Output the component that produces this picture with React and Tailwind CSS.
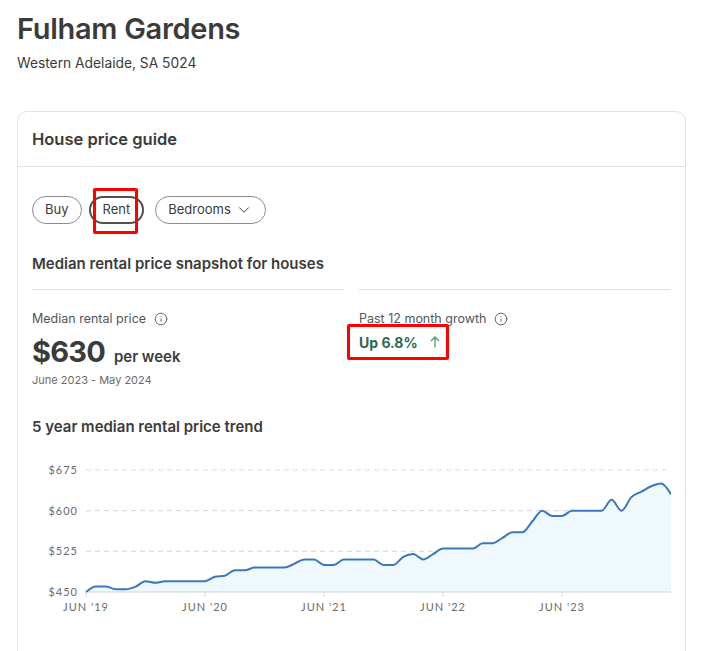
import { Info, ChevronDown } from 'lucide-react';

const rents = [
  450, 460, 460, 455, 455, 460, 470, 467, 470, 470, 470, 470, 470, 478, 480, 490, 490, 495, 495, 495,
  495, 502, 510, 510, 500, 500, 510, 510, 510, 510, 500, 500, 515, 520, 510, 520, 530, 530, 530, 530,
  540, 540, 550, 560, 560, 580, 600, 590, 590, 600, 600, 600, 600, 620, 600, 625, 635, 645, 650, 630,
];

const X0 = 54;
const STEP = 119 / 12;
const BASE = 137;
const yOf = (v) => BASE - (v - 450) * (122 / 225);

// monotone cubic, same idea as d3.curveMonotoneX
const monotonePath = (pts) => {
  const n = pts.length;
  const t = new Array(n).fill(0);
  const slope = (i) => (pts[i + 1][1] - pts[i][1]) / (pts[i + 1][0] - pts[i][0]);
  for (let i = 1; i < n - 1; i++) {
    const s0 = slope(i - 1);
    const s1 = slope(i);
    const h0 = pts[i][0] - pts[i - 1][0];
    const h1 = pts[i + 1][0] - pts[i][0];
    const p = (s0 * h1 + s1 * h0) / (h0 + h1);
    t[i] = (Math.sign(s0) + Math.sign(s1)) * Math.min(Math.abs(s0), Math.abs(s1), 0.5 * Math.abs(p)) || 0;
  }
  t[0] = (3 * slope(0) - t[1]) / 2;
  t[n - 1] = (3 * slope(n - 2) - t[n - 2]) / 2;
  let d = `M${pts[0][0]},${pts[0][1]}`;
  for (let i = 0; i < n - 1; i++) {
    const [xa, ya] = pts[i];
    const [xb, yb] = pts[i + 1];
    const dx = (xb - xa) / 3;
    d += ` C${xa + dx},${ya + dx * t[i]} ${xb - dx},${yb - dx * t[i + 1]} ${xb},${yb}`;
  }
  return d;
};

const TrendChart = () => {
  const pts = rents.map((v, i) => [X0 + i * STEP, yOf(v)]);
  const line = monotonePath(pts);
  const last = pts[pts.length - 1][0];
  const area = `${line} L${last},${BASE} L${X0},${BASE} Z`;
  const ticks = [0, 12, 24, 36, 48];
  const labels = ["JUN '19", "JUN '20", "JUN '21", "JUN '22", "JUN '23"];

  return (
    <svg width="639" height="180" className="block mt-[16px]" style={{ fontFamily: 'Lato, sans-serif' }}>
      {[675, 600, 525].map((v) => (
        <line key={v} x1={X0} x2={634} y1={yOf(v)} y2={yOf(v)} stroke="#dcdcdc" strokeWidth="1.2" strokeDasharray="5 4" />
      ))}
      <path d={area} fill="#eef8fd" />
      <line x1={X0} x2={last} y1={BASE} y2={BASE} stroke="#d4d4d4" strokeWidth="1.2" />
      {ticks.map((i) => (
        <line key={i} x1={X0 + i * STEP} x2={X0 + i * STEP} y1={BASE} y2={BASE + 5} stroke="#d8d8d8" strokeWidth="1" />
      ))}
      <path d={line} fill="none" stroke="#3b77bd" strokeWidth="2" />
      {[675, 600, 525, 450].map((v) => (
        <text key={v} x={46} y={yOf(v) + 4} textAnchor="end" fontSize="11" letterSpacing="1" fill="#6b6b6b">
          ${v}
        </text>
      ))}
      {ticks.map((i, k) => (
        <text key={i} x={X0 + i * STEP} y={156} textAnchor="middle" fontSize="11" letterSpacing="1" fill="#6b6b6b">
          {labels[k]}
        </text>
      ))}
    </svg>
  );
};

const Pill = ({ children, active }) => (
  <button
    className={`h-[28px] rounded-full px-[12px] text-[13px] text-[#3b3b3b] flex items-center gap-[4px] ${
      active ? 'border-2 border-[#505050]' : 'border border-[#8c8c8c]'
    }`}
  >
    {children}
  </button>
);

export default function App() {
  return (
    <div className="bg-white min-h-screen pl-[17px] pt-[11px] text-[#3b3b3b]" style={{ fontFamily: 'Inter, sans-serif' }}>
      <h1 className="text-[29px] leading-[36px] font-semibold tracking-[-0.3px]">Fulham Gardens</h1>
      <p className="mt-[6px] text-[13.8px] leading-[20px]">Western Adelaide, SA 5024</p>

      <div className="mt-[38px] w-[669px] rounded-[10px] border border-[#e2e2e2] pb-10">
        <div className="h-[55px] border-b border-[#e2e2e2] px-[14px] flex items-center">
          <h2 className="text-[16.5px] font-semibold">House price guide</h2>
        </div>

        <div className="px-[14px]">
          <div className="pt-[29px] flex items-center">
            <Pill>Buy</Pill>
            <div className="relative ml-[7px]">
              <Pill active>Rent</Pill>
              <span className="absolute left-[4px] right-[6px] -top-[8px] -bottom-[10px] border-[3px] border-[#ff0000] rounded-[2px]" />
            </div>
            <div className="ml-[11px]">
              <Pill>
                Bedrooms <ChevronDown size={18} strokeWidth={1.3} />
              </Pill>
            </div>
          </div>

          <h3 className="mt-[28px] text-[15px] leading-[24px] font-semibold">Median rental price snapshot for houses</h3>

          <div className="mt-[13px] grid grid-cols-2 gap-[15px]">
            <div>
              <div className="h-px bg-[#e2e2e2]" />
              <div className="mt-[19px] flex items-center gap-[6px] text-[12.5px] leading-[20px] text-[#555]">
                Median rental price <Info size={14} strokeWidth={1.5} className="ml-[2px]" />
              </div>
              <div className="mt-[3px] flex items-baseline gap-[9px]">
                <span className="text-[29px] leading-[40px] font-bold tracking-[-0.8px]">$630</span>
                <span className="text-[15px] font-semibold">per week</span>
              </div>
              <p className="text-[11px] leading-[16px] text-[#6b6b6b]">June 2023 - May 2024</p>
            </div>
            <div>
              <div className="h-px bg-[#e2e2e2]" />
              <div className="mt-[19px] flex items-center gap-[6px] text-[12.5px] leading-[20px] text-[#555]">
                Past 12 month growth <Info size={14} strokeWidth={1.5} className="ml-[2px]" />
              </div>
              <div className="relative mt-[1px] inline-flex items-center gap-[12px] h-[24px]">
                <span className="text-[14px] font-bold text-[#2d6a4f]">Up 6.8%</span>
                <svg width="10" height="12" viewBox="0 0 10 12" fill="none" stroke="#5a9676" strokeWidth="1.3">
                  <path d="M5 11.5V1M1 5l4-4 4 4" />
                </svg>
                <span className="absolute -left-[12px] -right-[9px] -top-[6px] -bottom-[6px] border-[3px] border-[#ff0000] rounded-[2px]" />
              </div>
            </div>
          </div>

          <h3 className="mt-[27px] text-[15px] leading-[24px] font-semibold">5 year median rental price trend</h3>

          <TrendChart />
        </div>
      </div>
    </div>
  );
}
